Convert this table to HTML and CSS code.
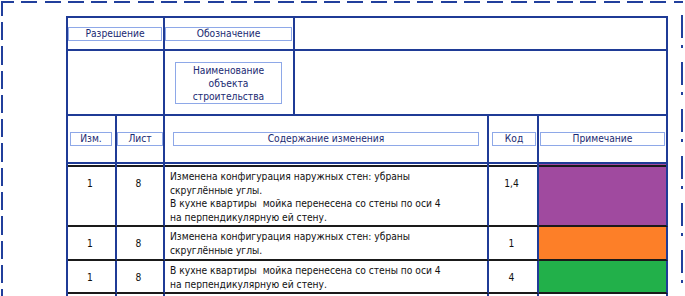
FILE: index.html
```html
<!DOCTYPE html>
<html lang="ru">
<head>
    <meta charset="UTF-8">
    <title>Лист регистрации изменений</title>
    <link rel="stylesheet" href="styles.css">
</head>
<body>

    <div class="frame">
        <div class="sheet">

            <!-- Штамп: разрешение, обозначение, наименование -->
            <div class="stamp">
                <div class="cell cell-mid"><span class="tag">Разрешение</span></div>
                <div class="cell cell-mid"><span class="tag">Обозначение</span></div>
                <div class="cell"></div>
                <div class="cell"></div>
                <div class="cell cell-mid"><span class="tag tag-name">Наименование<br>объекта<br>строительства</span></div>
                <div class="cell"></div>
            </div>

            <!-- Таблица изменений -->
            <div class="changes">
                <div class="cell cell-mid head"><span class="tag tag-izm">Изм.</span></div>
                <div class="cell cell-mid head"><span class="tag tag-list">Лист</span></div>
                <div class="cell cell-mid head"><span class="tag tag-text">Содержание изменения</span></div>
                <div class="cell cell-mid head"><span class="tag tag-code">Код</span></div>
                <div class="cell cell-mid head"><span class="tag tag-note">Примечание</span></div>

                <div class="cell row first num">1</div>
                <div class="cell row first num">8</div>
                <div class="cell row first text">Изменена конфигурация наружных стен: убраны<br>скруглённые углы.<br>В кухне квартиры&nbsp; мойка перенесена со стены по оси 4<br>на перпендикулярную ей стену.</div>
                <div class="cell row first num">1,4</div>
                <div class="cell row first note-purple"></div>

                <div class="cell row num">1</div>
                <div class="cell row num">8</div>
                <div class="cell row text">Изменена конфигурация наружных стен: убраны<br>скруглённые углы.</div>
                <div class="cell row num">1</div>
                <div class="cell row note-orange"></div>

                <div class="cell row num">1</div>
                <div class="cell row num">8</div>
                <div class="cell row text">В кухне квартиры&nbsp; мойка перенесена со стены по оси 4<br>на перпендикулярную ей стену.</div>
                <div class="cell row num">4</div>
                <div class="cell row note-green"></div>

                <div class="cell row empty"></div>
                <div class="cell row empty"></div>
                <div class="cell row empty"></div>
                <div class="cell row empty"></div>
                <div class="cell row empty"></div>
            </div>

        </div>
    </div>

</body>
</html>
```

FILE: styles.css
```css
html, body {
    margin: 0;
    overflow: hidden;
    background: #fff;
}
body {
    font-family: "DejaVu Sans Condensed", "DejaVu Sans", sans-serif;
    font-stretch: condensed;
    font-size: 10.2px;
    color: #111;
}
/* Пунктирная рамка листа */
.frame {
    margin: 1px 0 0 1px;
    width: 682px;
    height: 295px;
    box-sizing: border-box;
    padding: 15px 0 0 65px;
    background:
        repeating-linear-gradient(90deg, #213f9c 0 13px, transparent 13px 20.3px, #213f9c 20.3px 23.3px) left top / 100% 2px no-repeat,
        repeating-linear-gradient(180deg, #213f9c 0 15px, transparent 15px 21px, #213f9c 21px 24.3px) left top / 2px 100% no-repeat,
        repeating-linear-gradient(180deg, transparent 0 14px, #213f9c 14px 37px, transparent 37px 44px, #213f9c 44px 47px) right top / 2px 100% no-repeat;
}
.sheet {
    width: 602px;
    box-sizing: border-box;
    border-left: 2px solid #1f3b96;
    border-top: 2px solid #1f3b96;
}
.cell {
    box-sizing: border-box;
    border-right: 2px solid #1f3b96;
    border-bottom: 2px solid #1f3b96;
}
.cell-mid {
    display: flex;
    align-items: center;
    justify-content: center;
}
/* Надписи в рамках */
.tag {
    flex: 1;
    height: 14px;
    box-sizing: border-box;
    border: 1px solid #8ea8e8;
    color: #1a2a72;
    line-height: 12px;
    text-align: center;
    white-space: nowrap;
}
.tag-name {
    flex: 0 0 107px;
    height: 42px;
    line-height: 13px;
    padding-top: 1px;
}
.stamp {
    display: grid;
    grid-template-columns: 97px 130px 373px;
    grid-template-rows: 33px 65px;
}
.stamp .cell-mid .tag {
    margin: 0 1px 0 0;
}
.stamp .tag-name {
    margin: 0;
}
.changes {
    display: grid;
    grid-template-columns: 49px 48px 324px 50px 129px;
    grid-template-rows: 48px 63px 34px 33px 2px;
}
.tag-izm { margin: 0 3px 0 2px; }
.tag-list { margin: 0; }
.tag-text { margin: 0 8px; }
.tag-code { margin: 0 1px 0 3px; }
.tag-note { margin: 0 1px 0 1px; }

/* Строки изменений */
.row {
    border-bottom-color: #1a1a1a;
}
.row.empty {
    border-bottom: none;
}
.row.first {
    padding-top: 3px;
    background-image: linear-gradient(#1a1a1a, #1a1a1a);
    background-repeat: no-repeat;
    background-position: 0 1px;
    background-size: 100% 2px;
}
.num {
    text-align: center;
    padding-top: 10px;
    padding-right: 3px;
    line-height: 13.5px;
}
.row.first.num {
    padding-top: 13px;
}
.text {
    padding: 3px 0 0 5px;
    line-height: 13.5px;
    white-space: nowrap;
}
.row.first.text {
    padding-top: 6px;
}
.note-purple { background-color: #a04a9f; }
.note-orange { background-color: #fd7f28; }
.note-green  { background-color: #22b04a; }
```
